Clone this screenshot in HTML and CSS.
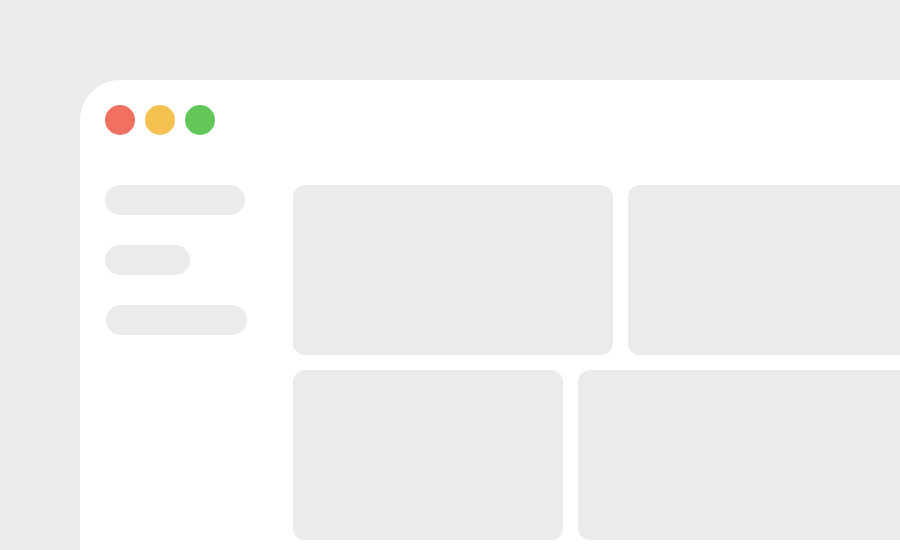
FILE: index.html
```html
<!DOCTYPE html>
<html lang="en">

<head>
	<meta charset="UTF-8">
	<meta name="viewport" content="width=device-width, initial-scale=1.0">
	<title>Skeleton</title>
	<link rel="stylesheet" href="styles.css">
</head>

<body>
	<div class="window">
		<div class="dots">
			<span class="dot red"></span>
			<span class="dot yellow"></span>
			<span class="dot green"></span>
		</div>
		<div class="layout">
			<aside class="sidebar">
				<div class="pill wide"></div>
				<div class="pill short"></div>
				<div class="pill wide shift"></div>
			</aside>
			<main class="content">
				<div class="row">
					<div class="card w320"></div>
					<div class="card w320"></div>
				</div>
				<div class="row">
					<div class="card w270"></div>
					<div class="card w360"></div>
				</div>
			</main>
		</div>
	</div>
</body>

</html>
```

FILE: styles.css
```css
html,
body {
	margin: 0;
	height: 550px;
	overflow: hidden;
}

body {
	background: #ebebeb;
}

/* window frame runs off the right and bottom edges */
.window {
	box-sizing: border-box;
	margin: 80px 0 0 80px;
	width: 820px;
	height: 470px;
	padding: 25px;
	background: #fff;
	border-top-left-radius: 40px;
	overflow: hidden;
}

.dots {
	display: flex;
	gap: 10px;
}

.dot {
	width: 30px;
	height: 30px;
	border-radius: 50%;
}

.red {
	background: #f07062;
}

.yellow {
	background: #f5c150;
}

.green {
	background: #62c756;
}

.layout {
	display: flex;
	margin-top: 50px;
}

.sidebar {
	width: 188px;
	flex-shrink: 0;
	display: flex;
	flex-direction: column;
	gap: 30px;
}

.pill {
	height: 30px;
	border-radius: 15px;
	background: #ebebeb;
}

.wide {
	width: 140px;
}

.short {
	width: 85px;
}

.shift {
	margin-left: 1px;
	width: 141px;
}

.content {
	display: flex;
	flex-direction: column;
	gap: 15px;
}

.row {
	display: flex;
	gap: 15px;
}

.card {
	height: 170px;
	border-radius: 12px;
	background: #ebebeb;
	flex-shrink: 0;
}

.w320 {
	width: 320px;
}

.w270 {
	width: 270px;
}

.w360 {
	width: 360px;
}
```
